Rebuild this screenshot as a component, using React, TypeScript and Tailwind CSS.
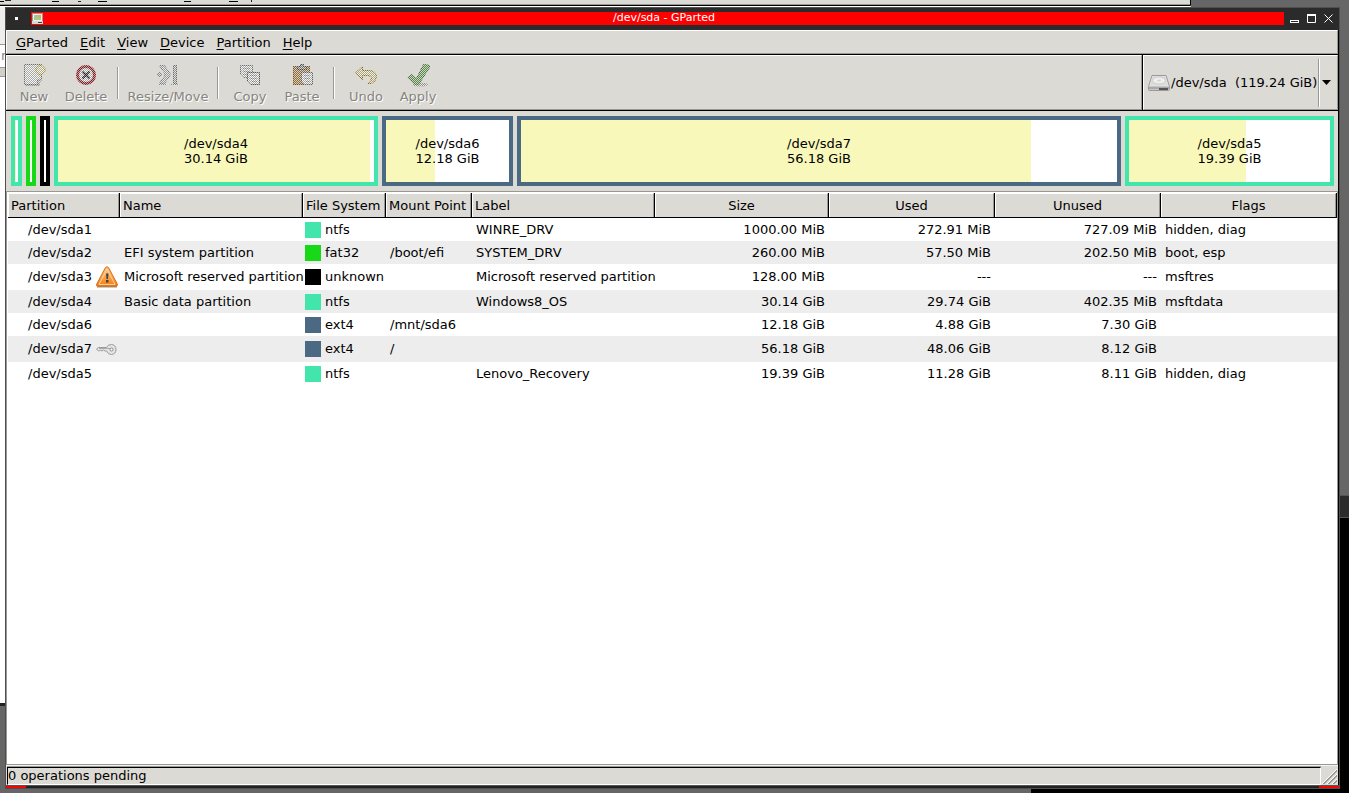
import React, { useState } from 'react'

type Fs = 'ntfs' | 'fat32' | 'unknown' | 'ext4'

interface Partition {
    path: string
    icon?: 'warning' | 'key'
    name: string
    fs: Fs
    mount: string
    label: string
    size: string
    used: string
    unused: string
    flags: string
    usedPercent: number
    grow: string
    showText: boolean
}

const swatch: Record<Fs, string> = {
    ntfs: 'bg-[#42e5ac]',
    fat32: 'bg-[#18d918]',
    unknown: 'bg-black',
    ext4: 'bg-[#4b6983]',
}

const outline: Record<Fs, string> = {
    ntfs: 'border-[#42e5ac]',
    fat32: 'border-[#18d918]',
    unknown: 'border-black',
    ext4: 'border-[#4b6983]',
}

const partitions: Partition[] = [
    { path: '/dev/sda1', name: '', fs: 'ntfs', mount: '', label: 'WINRE_DRV', size: '1000.00 MiB', used: '272.91 MiB', unused: '727.09 MiB', flags: 'hidden, diag', usedPercent: 27, grow: 'w-[11px]', showText: false },
    { path: '/dev/sda2', name: 'EFI system partition', fs: 'fat32', mount: '/boot/efi', label: 'SYSTEM_DRV', size: '260.00 MiB', used: '57.50 MiB', unused: '202.50 MiB', flags: 'boot, esp', usedPercent: 0, grow: 'w-[10px]', showText: false },
    { path: '/dev/sda3', icon: 'warning', name: 'Microsoft reserved partition', fs: 'unknown', mount: '', label: 'Microsoft reserved partition', size: '128.00 MiB', used: '---', unused: '---', flags: 'msftres', usedPercent: 0, grow: 'w-[10px]', showText: false },
    { path: '/dev/sda4', name: 'Basic data partition', fs: 'ntfs', mount: '', label: 'Windows8_OS', size: '30.14 GiB', used: '29.74 GiB', unused: '402.35 MiB', flags: 'msftdata', usedPercent: 98.7, grow: 'grow-[316] basis-0', showText: true },
    { path: '/dev/sda6', name: '', fs: 'ext4', mount: '/mnt/sda6', label: '', size: '12.18 GiB', used: '4.88 GiB', unused: '7.30 GiB', flags: '', usedPercent: 40, grow: 'grow-[123] basis-0', showText: true },
    { path: '/dev/sda7', icon: 'key', name: '', fs: 'ext4', mount: '/', label: '', size: '56.18 GiB', used: '48.06 GiB', unused: '8.12 GiB', flags: '', usedPercent: 85.5, grow: 'grow-[596] basis-0', showText: true },
    { path: '/dev/sda5', name: '', fs: 'ntfs', mount: '', label: 'Lenovo_Recovery', size: '19.39 GiB', used: '11.28 GiB', unused: '8.11 GiB', flags: 'hidden, diag', usedPercent: 58.2, grow: 'grow-[201] basis-0', showText: true },
]

const columns = [
    { title: 'Partition', width: 'w-[112px]', center: false },
    { title: 'Name', width: 'w-[183px]', center: false },
    { title: 'File System', width: 'w-[83px]', center: false },
    { title: 'Mount Point', width: 'w-[86px]', center: false },
    { title: 'Label', width: 'w-[183px]', center: false },
    { title: 'Size', width: 'w-[174px]', center: true },
    { title: 'Used', width: 'w-[166px]', center: true },
    { title: 'Unused', width: 'w-[166px]', center: true },
    { title: 'Flags', width: '', center: true },
]

const menus = ['GParted', 'Edit', 'View', 'Device', 'Partition', 'Help']

// Insensitive icons: every other pixel is washed out, the rest are darkened
function StippledIcon({ id, children }: { id: string; children: React.ReactNode }) {
    return (
        <svg width="24" height="24" viewBox="0 0 24 24" fill="none" aria-hidden="true">
            <defs>
                <pattern id={`${id}-checker`} width="2" height="2" patternUnits="userSpaceOnUse">
                    <rect width="1" height="1" fill="#fff" shapeRendering="crispEdges" />
                    <rect x="1" y="1" width="1" height="1" fill="#fff" shapeRendering="crispEdges" />
                </pattern>
                <mask id={`${id}-mask`} maskUnits="userSpaceOnUse" x="0" y="0" width="24" height="24">
                    <rect width="24" height="24" fill={`url(#${id}-checker)`} />
                </mask>
                <filter id={`${id}-light`} colorInterpolationFilters="sRGB">
                    <feComponentTransfer>
                        <feFuncR type="linear" slope="0.5" intercept="0.5" />
                        <feFuncG type="linear" slope="0.5" intercept="0.5" />
                        <feFuncB type="linear" slope="0.5" intercept="0.5" />
                    </feComponentTransfer>
                </filter>
                <filter id={`${id}-dark`} colorInterpolationFilters="sRGB">
                    <feComponentTransfer>
                        <feFuncR type="linear" slope="0.7" />
                        <feFuncG type="linear" slope="0.7" />
                        <feFuncB type="linear" slope="0.7" />
                    </feComponentTransfer>
                </filter>
            </defs>
            <g filter={`url(#${id}-light)`}>{children}</g>
            <g mask={`url(#${id}-mask)`}>
                <g filter={`url(#${id}-dark)`}>{children}</g>
            </g>
        </svg>
    )
}

function NewIcon() {
    return (
        <StippledIcon id="new">
            <path d="M2.500 1.500h17v15l-4 5h-13z" fill="#f0f0ee" stroke="#999" />
            <path d="M3 22h15" stroke="#888" />
            <path d="M15.500 21v-4h4" fill="#ddd" stroke="#999" />
            <path d="M17 2.500h3l3 3v3l-3 3h-3l-3-3v-3z" fill="#f6f2d6" stroke="#c9b840" />
        </StippledIcon>
    )
}

function DeleteIcon() {
    return (
        <StippledIcon id="delete">
            <circle cx="12" cy="12" r="8.500" fill="#eeeeec" stroke="#a8353b" strokeWidth="3" />
            <path d="M8.500 8.500l7 7M15.500 8.500l-7 7" stroke="#333" strokeWidth="2" />
        </StippledIcon>
    )
}

function ResizeIcon() {
    return (
        <StippledIcon id="resize">
            <circle cx="3.500" cy="11.500" r="2" fill="#ccc" stroke="#aaa" />
            <path d="M3.500 2.500h5l6 9-6 9h-5l6-9z" fill="#d8d8d8" stroke="#aaa" />
            <rect x="17.500" y="2.500" width="3" height="18" fill="#ccc" stroke="#999" />
            <path d="M2 21.500h9M15 21.500h8" stroke="#ccc" />
        </StippledIcon>
    )
}

function CopyIcon() {
    return (
        <StippledIcon id="copy">
            <path d="M2.500 2.500h12v12h-9l-3-3z" fill="#f0f0ee" stroke="#999" />
            <path d="M5 5.500h7M5 8.500h7M5 11.500h6" stroke="#bbb" />
            <path d="M9.500 9.500h12v12h-9l-3-3z" fill="#f0f0ee" stroke="#777" />
            <path d="M12 12.500h7M12 15.500h7M14 18.500h5" stroke="#bbb" />
        </StippledIcon>
    )
}

function PasteIcon() {
    return (
        <StippledIcon id="paste">
            <rect x="3.500" y="3.500" width="16" height="18" fill="#c39a66" stroke="#a3733a" />
            <path d="M7.500 6.500v-3h3v-2h3v2h3v3z" fill="#aaa" stroke="#666" />
            <path d="M11.500 9.500h11v12h-8l-3-3z" fill="#f0f0ee" stroke="#888" />
            <path d="M14 12.500h6M14 15.500h6M16 18.500h4" stroke="#bbb" />
        </StippledIcon>
    )
}

function UndoIcon() {
    return (
        <StippledIcon id="undo">
            <path d="M1.500 10l7-6.500v4h7q6.500.5 7 6-.5 5-5 7h-4q4.500-3 4-6-1-2-4-2h-5v4z" fill="#efe8c4" stroke="#b39c40" />
        </StippledIcon>
    )
}

function ApplyIcon() {
    return (
        <StippledIcon id="apply">
            <ellipse cx="14" cy="21.500" rx="8" ry="2" fill="#cfcdc9" />
            <path d="M1.500 14.500l4-3 5 4 7-14h2l4 1v2l-11 17h-3z" fill="#8db87a" stroke="#6c9a58" />
        </StippledIcon>
    )
}

function DriveIcon() {
    return (
        <svg width="24" height="24" viewBox="0 0 24 24" fill="none" aria-hidden="true">
            <path d="M5 4.500h14l3.500 11v3q0 1-1 1h-19q-1 0-1-1v-3z" fill="#e6e6e6" stroke="#999" />
            <path d="M2 15.500h20v3h-20z" fill="#a9a9a9" />
            <path d="M12 17h9v2h-9z" fill="#555" />
            <path d="M5.500 5.500h13l2.500 9h-18z" fill="#dcdcdc" />
            <ellipse cx="12" cy="9.500" rx="6.500" ry="3.500" fill="#efefef" stroke="#ccc" />
            <ellipse cx="12" cy="9.500" rx="2" ry="1" fill="#d4d4d4" />
        </svg>
    )
}

function WarningIcon() {
    return (
        <svg width="22" height="22" viewBox="0 0 22 22" fill="none" aria-label="Warning">
            <defs>
                <linearGradient id="warning-fill" x1="0" y1="0" x2="0" y2="1">
                    <stop offset="0" stopColor="#fbc788" />
                    <stop offset="0.500" stopColor="#f9a850" />
                    <stop offset="1" stopColor="#f07a10" />
                </linearGradient>
            </defs>
            <path d="M1 20.500h20" stroke="#a88d70" strokeWidth="2" />
            <path d="M9.500 1.500q1.500-1.500 3 0l9 17q0 1.500-1 1.500h-19q-1.500 0-1-1.500z" fill="url(#warning-fill)" stroke="#e0690a" />
            <path d="M11 3l-8 15.500h16z" stroke="#fcd3a4" />
            <path d="M10 7.500h2.500l-.5 5.500h-1.500z" fill="#444" />
            <rect x="10" y="14" width="2.500" height="2.500" fill="#444" />
        </svg>
    )
}

function KeyIcon() {
    return (
        <svg width="22" height="22" viewBox="0 0 22 22" fill="none" aria-label="Mounted">
            <path d="M10.500 9.500h-8l-2 1.500 2 2h1l1-1 1.500 1 1.500-1 1.500 1h1.500q1.500 3.500 5 3.500 4.500-.5 4.500-5t-4.500-5q-4 0-5 3z" fill="#e4e4e2" stroke="#9a9a98" />
            <path d="M3 10.500h11" stroke="#aaa" />
            <circle cx="15.500" cy="11.500" r="1.500" fill="#fff" stroke="#888" />
        </svg>
    )
}

function ToolButton({ label, icon, wide }: { label: string; icon: React.ReactNode; wide?: boolean }) {
    return (
        <button
            type="button"
            disabled
            className={`flex flex-col items-center gap-0.5 text-[#868480] [text-shadow:1px_1px_0_#fff] ${wide ? 'w-22' : 'w-13'}`}
        >
            {icon}
            <span className="leading-4">{label}</span>
        </button>
    )
}

function ToolSeparator() {
    return (
        <div className="flex w-3 justify-center pt-1">
            <div className="h-8 w-0.5 border-l border-r border-l-[#9a9892] border-r-white"></div>
        </div>
    )
}

function TitleBar() {
    return (
        <div className="flex h-[22px] items-start bg-[#2b2b2b] pt-1">
            <div className="flex h-[13px] w-[25px] items-center pl-[9px]">
                <span className="size-[3px] bg-white"></span>
            </div>
            <div className="flex h-[13px] flex-1 items-start bg-[#ff0000]">
                <svg width="13" height="13" viewBox="0 0 13 13" aria-hidden="true">
                    <rect x="1.500" y="1.500" width="10" height="8" fill="#f2f0ea" stroke="#999" />
                    <rect x="3" y="3" width="7" height="5" fill="#a8c888" />
                    <path d="M5 3h5v3z" fill="#e8a070" />
                    <rect x="1" y="9" width="11" height="3" fill="#d8d8d4" />
                    <rect x="7" y="10" width="4" height="1" fill="#444" />
                </svg>
                <h1 className="flex-1 text-center text-[11px] leading-3 text-white">/dev/sda - GParted</h1>
            </div>
            <div className="flex h-[13px] items-center gap-2 px-[6px]">
                <button type="button" aria-label="Minimize">
                    <svg className="block" width="9" height="9" viewBox="0 0 9 9" fill="none" stroke="#fff">
                        <rect x="0.500" y="6.500" width="8" height="2" />
                    </svg>
                </button>
                <button type="button" aria-label="Maximize">
                    <svg className="block" width="9" height="9" viewBox="0 0 9 9" fill="none" stroke="#fff">
                        <path d="M0.500 0v8.500h8V0" />
                        <path d="M0 1h9" strokeWidth="2" />
                    </svg>
                </button>
                <button type="button" aria-label="Close">
                    <svg className="block" width="9" height="9" viewBox="0 0 9 9" fill="none" stroke="#fff">
                        <path d="M0.500 0.500l8 8M8.500 0.500l-8 8" />
                    </svg>
                </button>
            </div>
        </div>
    )
}

function MenuBar() {
    return (
        <nav className="border-b border-black bg-[#dcdad5]">
            <div className="flex h-6 items-center border-t border-r border-b border-l border-t-white border-r-[#9a9892] border-b-[#9a9892] border-l-white pt-px pl-[3px]">
                {menus.map((menu) => (
                    <button key={menu} type="button" className="px-1.5 leading-5">
                        <span className="underline underline-offset-2">{menu[0]}</span>
                        {menu.slice(1)}
                    </button>
                ))}
            </div>
        </nav>
    )
}

function ToolBar() {
    const [device, setDevice] = useState('/dev/sda')

    return (
        <div className="flex border-b border-black">
            <div className="flex h-[55px] flex-1 border-t border-r border-b border-l border-t-white border-r-[#9a9892] border-b-[#9a9892] border-l-white pt-[7px] pl-px">
                <ToolButton label="New" icon={<NewIcon />} />
                <ToolButton label="Delete" icon={<DeleteIcon />} />
                <ToolSeparator />
                <ToolButton label="Resize/Move" icon={<ResizeIcon />} wide />
                <ToolSeparator />
                <ToolButton label="Copy" icon={<CopyIcon />} />
                <ToolButton label="Paste" icon={<PasteIcon />} />
                <ToolSeparator />
                <ToolButton label="Undo" icon={<UndoIcon />} />
                <ToolButton label="Apply" icon={<ApplyIcon />} />
            </div>

            {/* Device chooser */}
            <div className="border-l border-black">
                <label className="flex h-[55px] items-center border-t border-r border-b border-l border-t-white border-r-[#9a9892] border-b-[#9a9892] border-l-white pr-1.5 pl-[3px]">
                    <DriveIcon />
                    <select
                        aria-label="Device"
                        value={device}
                        onChange={(e) => setDevice(e.target.value)}
                        className="w-[147px] appearance-none bg-transparent leading-5 outline-none"
                    >
                        <option value="/dev/sda">{'/dev/sda\u00a0\u00a0(119.24 GiB)'}</option>
                    </select>
                    <span className="h-12 w-0.5 border-l border-r border-l-[#9a9892] border-r-white"></span>
                    <svg width="9" height="5" viewBox="0 0 9 5" className="ml-0.5" aria-hidden="true">
                        <path d="M0 0h9L4.500 5z" fill="#000" />
                    </svg>
                </label>
            </div>
        </div>
    )
}

function DiskMap() {
    return (
        <div className="flex h-20 gap-1 py-[5px] pr-1 pl-[5px]">
            {partitions.map((p) => (
                <div key={p.path} className={`relative flex items-center justify-center border-4 bg-white ${outline[p.fs]} ${p.grow}`}>
                    <div className="absolute inset-y-0 left-0 bg-[#f8f8ba]" style={{ width: `${p.usedPercent}%` }}></div>
                    {p.showText && (
                        <div className="relative text-center leading-[15px] whitespace-nowrap">
                            <div>{p.path}</div>
                            <div>{p.size}</div>
                        </div>
                    )}
                </div>
            ))}
        </div>
    )
}

function PartitionTable() {
    return (
        <div className="flex-1 border-t border-r border-b border-l border-[#9a9892] bg-white pt-px pl-px">
            <table className="w-full table-fixed border-separate border-spacing-0">
                <thead>
                    <tr>
                        {columns.map((col) => (
                            <th key={col.title} className={`border-r border-b border-black bg-[#dcdad5] p-0 font-normal ${col.width}`}>
                                <div className={`h-6 border-t border-r border-l border-t-white border-r-[#9a9892] border-l-white leading-[23px] whitespace-nowrap ${col.center ? 'text-center' : 'pl-0.5 text-left'}`}>
                                    {col.title}
                                </div>
                            </th>
                        ))}
                    </tr>
                </thead>
                <tbody>
                    {partitions.map((p) => (
                        <tr key={p.path} className={`whitespace-nowrap even:bg-[#ededed] ${p.icon ? 'h-[26px]' : 'h-[23px]'}`}>
                            <td className="p-0 pl-5">
                                <div className="flex items-center gap-1">
                                    {p.path}
                                    {p.icon === 'warning' && <WarningIcon />}
                                    {p.icon === 'key' && <KeyIcon />}
                                </div>
                            </td>
                            <td className="p-0 pl-1">{p.name}</td>
                            <td className="p-0 pl-0.5">
                                <div className="flex items-center gap-1">
                                    <span className={`size-4 ${swatch[p.fs]}`}></span>
                                    {p.fs}
                                </div>
                            </td>
                            <td className="p-0 pl-1">{p.mount}</td>
                            <td className="p-0 pl-1">{p.label}</td>
                            <td className="p-0 pr-1 text-right">{p.size}</td>
                            <td className="p-0 pr-1 text-right">{p.used}</td>
                            <td className="p-0 pr-1 text-right">{p.unused}</td>
                            <td className="p-0 pl-1">{p.flags}</td>
                        </tr>
                    ))}
                </tbody>
            </table>
        </div>
    )
}

function StatusBar() {
    return (
        <footer className="flex border-t border-[#f5f4f2] pl-px">
            <div className="flex-1 border-t border-[#9a9892]">
                <div className="h-[18px] border-t border-r border-b border-l border-t-black border-r-white border-b-white border-l-black leading-[16px]">
                    0 operations pending
                </div>
            </div>
            <svg width="17" height="19" viewBox="0 0 17 19" fill="none" aria-hidden="true">
                <path d="M1 18L16 3M6 18L16 8M11 18l5-5" stroke="#fff" />
                <path d="M2 18L16 4M3 18L16 5M7 18l9-9M8 18l8-8M12 18l4-4M13 18l3-3" stroke="#9a9892" />
            </svg>
        </footer>
    )
}

// Other windows peeking out from behind the main one
function Desktop() {
    return (
        <div className="absolute inset-0 overflow-hidden bg-[#666]" aria-hidden="true">
            <div className="absolute top-0 left-0 h-[704px] w-[6px] overflow-hidden bg-white">
                <div className="h-[45px] border-b border-[#9a9892] bg-[#efeeec]"></div>
                <div className="h-[22px] pl-px leading-[22px] text-[#888]">r</div>
                <div className="h-[10px] border-y border-[#9a9892] bg-[#d2cfc9]"></div>
            </div>
            <div className="absolute top-[703px] left-0 h-[3px] w-[6px] bg-[#222]"></div>
            <svg className="absolute top-0 left-0 bg-[#dcdad5]" width="1191" height="7" viewBox="0 0 1191 7" fill="none">
                {/* Bottom edge of that window's menu bar: mnemonic underlines and descenders */}
                <path d="M0 1.500h4M52 1.500h7M98 1.500h9M184 1.500h7M229 1.500h9" stroke="#000" />
                <path d="M5 .5h6M78 1.500h3M251.500 0v2" stroke="#222" />
                <path d="M0 4.500h1190" stroke="#9a9892" />
                <path d="M0 5.500h1190.500V0" stroke="#000" />
                <path d="M0 6.500h1190" stroke="#fff" />
            </svg>
            <div className="absolute top-[495px] right-0 bottom-0 w-[318px] border-t border-[#555] bg-black">
                <div className="h-[22px] border-b border-[#555] bg-[#2b2b2b]"></div>
            </div>
        </div>
    )
}

export default function App() {
    return (
        <div className="relative flex min-h-screen flex-col pt-[7px] pr-[9px] pb-1 pl-[5px] font-['DejaVu_Sans',sans-serif] text-[13px] text-black">
            <Desktop />
            <main className="relative flex flex-1 flex-col border border-[#4f4f4f] bg-[#dcdad5]">
                <TitleBar />
                <div className="flex flex-1 flex-col border-r border-black">
                    <MenuBar />
                    <ToolBar />
                    <DiskMap />
                    <PartitionTable />
                    <StatusBar />
                </div>
                {/* Bottom resize handle of the window frame */}
                <div className="flex h-[3px] justify-between border-t border-[#555] bg-[#222]">
                    <span className="w-5 bg-[#ff0000]"></span>
                    <span className="w-5 bg-[#ff0000]"></span>
                </div>
            </main>
        </div>
    )
}
